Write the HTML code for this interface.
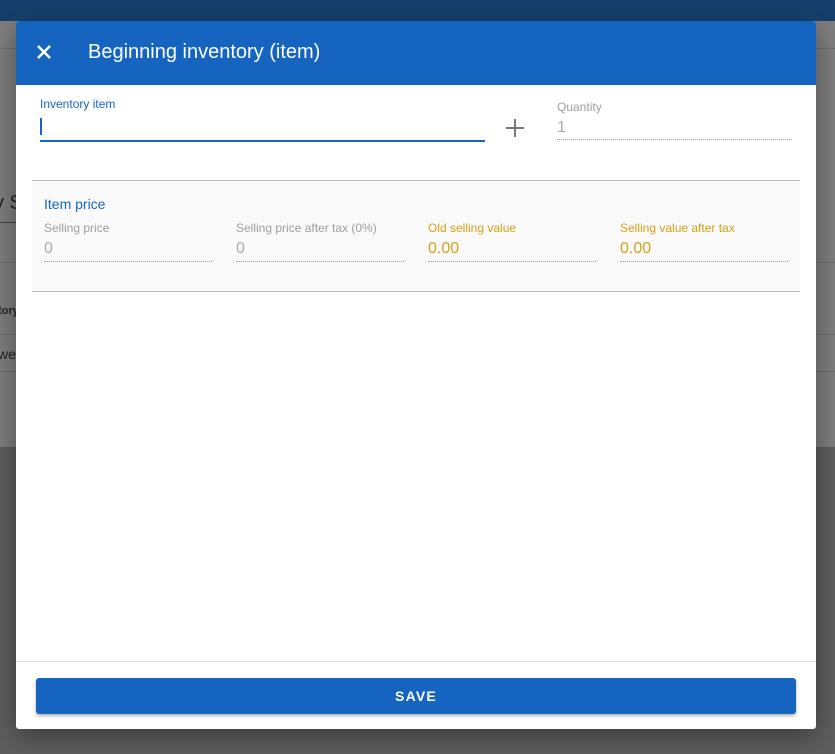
<!DOCTYPE html>
<html><head><style>
*{box-sizing:border-box;margin:0;padding:0}
body{width:835px;height:754px;overflow:hidden;position:relative;font-family:"Liberation Sans",sans-serif;background:#5f5f5f}
.bgtop{position:absolute;left:0;top:0;width:835px;height:21px;background:#173f6d}
.bgpage{position:absolute;left:0;top:21px;width:835px;height:426px;background:#7f7f7f}
.ln{position:absolute;left:0;height:1px;background:#6e6e6e;width:835px}
.bt{position:absolute;font-size:14px;color:#222}
.dlg{position:absolute;left:16px;top:21px;width:800px;height:708px;background:#fff;border-radius:3px;overflow:hidden;box-shadow:0 8px 30px rgba(0,0,0,.4)}
.hdr{height:64px;background:#1565c0;color:#fff;position:relative}
.hdr h1{position:absolute;left:72px;top:20px;font-size:20px;font-weight:normal}
.lab{position:absolute;font-size:12px}
.val{position:absolute;font-size:16px}
.dot{position:absolute;height:1px;border-top:1px dotted #999}
.sec{position:absolute;left:16px;top:159px;width:768px;height:112px;background:#fafafa;border-top:1px solid #bbb;border-bottom:1px solid #bbb}
.ftr{position:absolute;left:0;top:640px;width:800px;border-top:1px solid #e0e0e0}
.btn{position:absolute;left:20px;top:657px;width:760px;height:36px;background:#1565c0;border-radius:3px;color:#fff;font-size:14px;font-weight:bold;letter-spacing:1.2px;text-align:center;line-height:36px;box-shadow:0 2px 3px rgba(0,0,0,.3)}
</style></head><body>
<div class="bgtop"></div>
<div class="bgpage"></div>
<div class="ln" style="top:48px"></div>
<div class="ln" style="top:222px;width:16px;background:#444"></div>
<div class="ln" style="top:262px"></div>
<div class="ln" style="top:334px"></div>
<div class="ln" style="top:371px"></div>
<div class="bt" style="left:-6px;top:192px;font-size:20px">y S</div>
<div class="bt" style="left:-2px;top:305px;font-size:11px;font-weight:bold">tory</div>
<div class="bt" style="left:-2px;top:346px">weis</div>
<div class="dlg">
<div class="hdr">
<svg style="position:absolute;left:20px;top:23px" width="16" height="16" viewBox="0 0 16 16"><path d="M2 2L14 14M14 2L2 14" stroke="#fff" stroke-width="2.4"/></svg>
<h1>Beginning inventory (item)</h1>
</div>
<div class="lab" style="left:24px;top:76px;color:#1565c0">Inventory item</div>
<div style="position:absolute;left:24px;top:97px;width:1.5px;height:17px;background:#1565c0"></div>
<div style="position:absolute;left:24px;top:119px;width:445px;height:2px;background:#1565c0"></div>
<svg style="position:absolute;left:489px;top:97px" width="20" height="20" viewBox="0 0 20 20"><path d="M10 1V19M1 10H19" stroke="#777" stroke-width="2"/></svg>
<div class="lab" style="left:541px;top:79px;color:#9e9e9e">Quantity</div>
<div class="val" style="left:541px;top:98px;color:#aaa">1</div>
<div class="dot" style="left:541px;top:118px;width:235px"></div>
<div class="sec">
<div style="position:absolute;left:12px;top:15px;font-size:14px;color:#1565c0">Item price</div>
<div class="lab" style="left:12px;top:40px;color:#9e9e9e">Selling price</div>
<div class="val" style="left:12px;top:59px;color:#aaa">0</div>
<div class="dot" style="left:12px;top:80px;width:168px"></div>
<div class="lab" style="left:204px;top:40px;color:#9e9e9e">Selling price after tax (0%)</div>
<div class="val" style="left:204px;top:59px;color:#aaa">0</div>
<div class="dot" style="left:204px;top:80px;width:168px"></div>
<div class="lab" style="left:396px;top:40px;color:#d4a017">Old selling value</div>
<div class="val" style="left:396px;top:59px;color:#d4a017">0.00</div>
<div class="dot" style="left:396px;top:80px;width:168px"></div>
<div class="lab" style="left:588px;top:40px;color:#d4a017">Selling value after tax</div>
<div class="val" style="left:588px;top:59px;color:#d4a017">0.00</div>
<div class="dot" style="left:588px;top:80px;width:168px"></div>
</div>
<div class="ftr"></div>
<div class="btn">SAVE</div>
</div>
</body></html>
